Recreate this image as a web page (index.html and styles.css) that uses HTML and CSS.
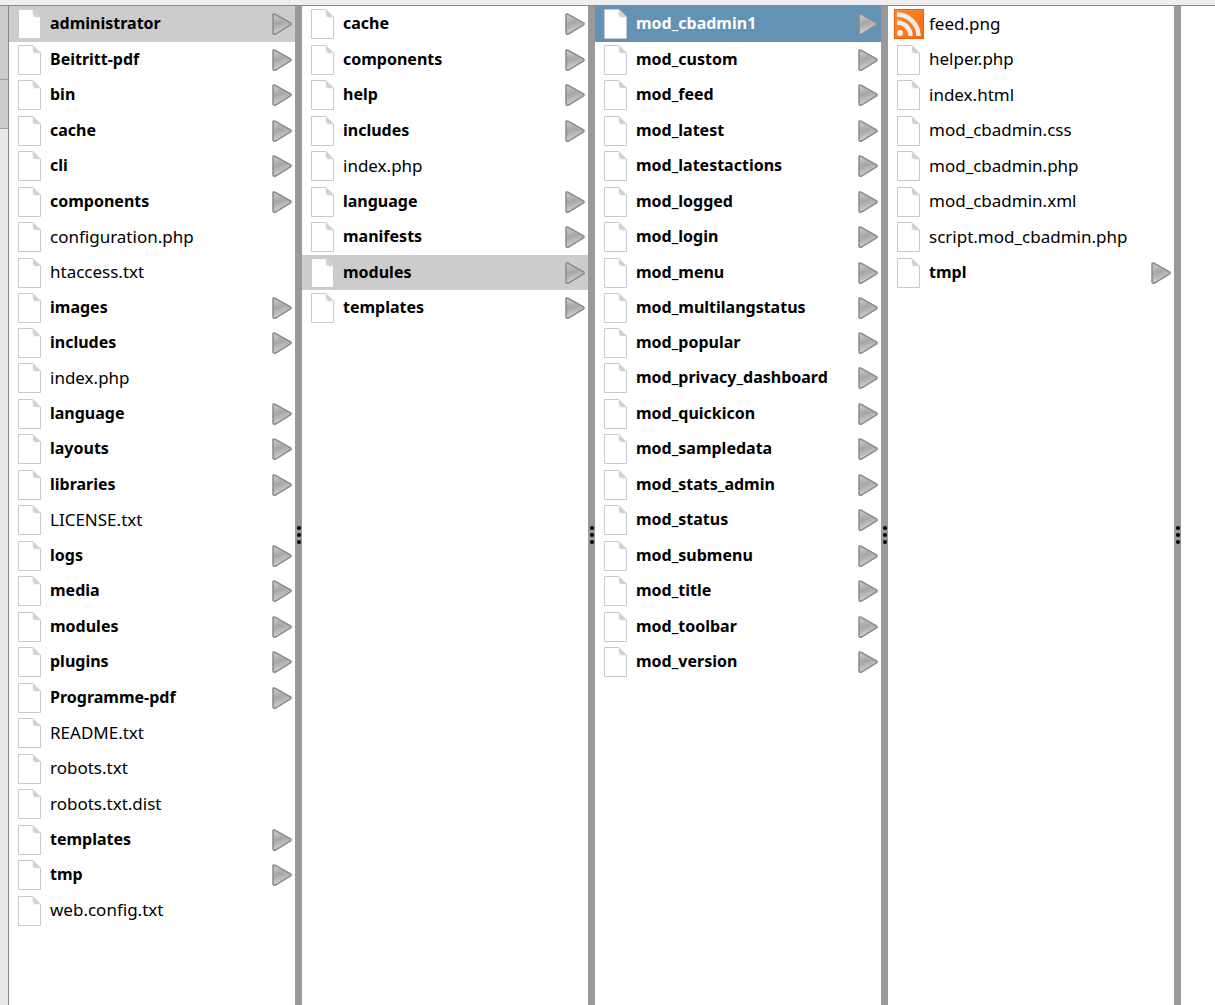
FILE: index.html
```html
<!DOCTYPE html>
<html lang="en">
<head>
  <meta charset="utf-8">
  <title>Files</title>
  <meta name="viewport" content="width=device-width, initial-scale=1.0">
  <link rel="stylesheet" href="styles.css">
</head>
<body>
  <svg class="defs" aria-hidden="true">
    <defs>
      <linearGradient id="fold" x1="0" y1="1" x2="1" y2="0">
        <stop offset="0" stop-color="#e8e8e8"/>
        <stop offset="0.4" stop-color="#c8cbcc"/>
        <stop offset="0.8" stop-color="#f6f6f6"/>
      </linearGradient>
      <linearGradient id="metal" x1="0" y1="0" x2=".3" y2="1">
        <stop offset="0" stop-color="#d0d0d0"/>
        <stop offset="0.5" stop-color="#a6a6a6"/>
        <stop offset="1" stop-color="#d4d4d4"/>
      </linearGradient>
      <linearGradient id="orange" x1="0" y1="0" x2="1" y2="1">
        <stop offset="0" stop-color="#f68b3c"/>
        <stop offset="0.5" stop-color="#fd7a1c"/>
        <stop offset="1" stop-color="#f86a08"/>
      </linearGradient>
    </defs>
    <symbol id="page" viewBox="0 0 30 30">
      <path d="M3.5 .5H18L25.500 8V29.500H3.500Z" fill="#fff" stroke="#c6cacc"/>
      <path d="M18 1L25 8H20Q18 8 18 6Z" fill="url(#fold)" stroke="#d4d7d8" stroke-width=".5"/>
    </symbol>
    <symbol id="feed" viewBox="0 0 30 30">
      <rect width="30" height="30" fill="#ee5f08"/>
      <rect x="1" y="1" width="28" height="28" fill="url(#orange)"/>
      <circle cx="6" cy="24" r="3" fill="#eee"/>
      <path d="M3 13.500A13.500 13.500 0 0 1 16.500 27M3 5.500A21.500 21.500 0 0 1 24.500 27" fill="none" stroke="#eee" stroke-width="4.500"/>
    </symbol>
    <symbol id="arrow" viewBox="0 0 20 22">
      <path d="M1 2Q1 .5 3 1.200L18.500 9.800Q19.800 11 18.500 12L4 20.800Q1.200 22 1 20Z" fill="url(#metal)" stroke="#8a8a8a" stroke-width="1.500"/>
      <path d="M2.300 3L4 3.200L17 10.800" fill="none" stroke="#b4b4b4" stroke-width=".8"/>
    </symbol>
  </svg>

  <div class="topbar"></div>
  <div class="main">
    <div class="gutter">
      <div class="tab tab-tall"></div>
      <div class="tab"></div>
    </div>
    <div class="browser" id="browser"></div>
  </div>

  <script>
    // a trailing slash marks a folder
    const columns = [
      {
        selected: 'administrator/',
        items: ['administrator/', 'Beitritt-pdf/', 'bin/', 'cache/', 'cli/', 'components/',
          'configuration.php', 'htaccess.txt', 'images/', 'includes/', 'index.php', 'language/',
          'layouts/', 'libraries/', 'LICENSE.txt', 'logs/', 'media/', 'modules/', 'plugins/',
          'Programme-pdf/', 'README.txt', 'robots.txt', 'robots.txt.dist', 'templates/', 'tmp/',
          'web.config.txt']
      },
      {
        selected: 'modules/',
        items: ['cache/', 'components/', 'help/', 'includes/', 'index.php', 'language/',
          'manifests/', 'modules/', 'templates/']
      },
      {
        selected: 'mod_cbadmin1/',
        focused: true,
        items: ['mod_cbadmin1/', 'mod_custom/', 'mod_feed/', 'mod_latest/', 'mod_latestactions/',
          'mod_logged/', 'mod_login/', 'mod_menu/', 'mod_multilangstatus/', 'mod_popular/',
          'mod_privacy_dashboard/', 'mod_quickicon/', 'mod_sampledata/', 'mod_stats_admin/',
          'mod_status/', 'mod_submenu/', 'mod_title/', 'mod_toolbar/', 'mod_version/']
      },
      {
        items: ['feed.png', 'helper.php', 'index.html', 'mod_cbadmin.css', 'mod_cbadmin.php',
          'mod_cbadmin.xml', 'script.mod_cbadmin.php', 'tmpl/']
      }
    ];

    function row(item, column) {
      const folder = item.endsWith('/');
      const name = item.replace('/', '');
      const icon = name.endsWith('.png') ? 'feed' : 'page';
      let cls = 'item';
      if (folder) cls += ' folder';
      if (item === column.selected) cls += column.focused ? ' selected focused' : ' selected';
      return `<li><button type="button" class="${cls}">
        <svg class="icon" aria-hidden="true"><use href="#${icon}"/></svg>
        <span class="name">${name}</span>
        ${folder ? '<svg class="arrow" aria-hidden="true"><use href="#arrow"/></svg>' : ''}
      </button></li>`;
    }

    const splitter = '<div class="splitter" role="separator"><i></i><i></i><i></i></div>';

    document.getElementById('browser').innerHTML = columns.map(column =>
      `<ul class="column">${column.items.map(item => row(item, column)).join('')}</ul>${splitter}`
    ).join('') + '<div class="rest"></div>';
  </script>
</body>
</html>
```
FILE: styles.css
```css
* {
  box-sizing: border-box;
}
body {
  margin: 0;
  min-height: 100vh;
  display: flex;
  flex-direction: column;
  background: #fff;
  color: #000;
  font-family: "Noto Sans", "Open Sans", sans-serif;
  font-size: 17px;
}
.defs {
  position: absolute;
  width: 0;
  height: 0;
}
.topbar {
  height: 6px;
  background: #eee;
  border-bottom: 1px solid #888;
}
.main {
  flex: 1;
  display: flex;
}

/* strip on the left with the ends of the tabs */
.gutter {
  width: 9px;
  background: #e8e8e8;
  border-right: 1px solid #888;
}
.tab {
  height: 49px;
  background: #ccc;
  border-bottom: 1px solid #a0a0a0;
}
.tab-tall {
  height: 74px;
}

.browser {
  flex: 1;
  display: flex;
}
.column {
  flex: 1;
  min-width: 0;
  margin: 0;
  padding: 0;
  list-style: none;
}
.column li {
  height: 36px;
}
.column li:nth-child(even),
.column li:nth-child(9) {
  height: 35px;
}
.item {
  display: flex;
  align-items: center;
  width: 100%;
  height: 100%;
  padding: 0 3px 0 6px;
  border: none;
  background: none;
  color: inherit;
  font: inherit;
  text-align: left;
}
.folder {
  font-size: 16px;
  font-weight: bold;
}
.selected {
  background: #ccc;
}
.focused {
  background: #6392b5;
  color: #fff;
}
.icon {
  flex: none;
  width: 30px;
  height: 30px;
}
.name {
  flex: 1;
  margin-left: 5px;
  padding-bottom: 2px;
  white-space: nowrap;
}
.arrow {
  flex: none;
  width: 20px;
  height: 22px;
}

.splitter {
  flex: none;
  width: 7px;
  padding-top: 58px;
  display: flex;
  flex-direction: column;
  align-items: center;
  justify-content: center;
  gap: 3px;
  background: #999;
  cursor: col-resize;
}
.splitter i {
  width: 4px;
  height: 4px;
  border-radius: 50%;
  background: #000;
}
.rest {
  flex: none;
  width: 34px;
}
```
